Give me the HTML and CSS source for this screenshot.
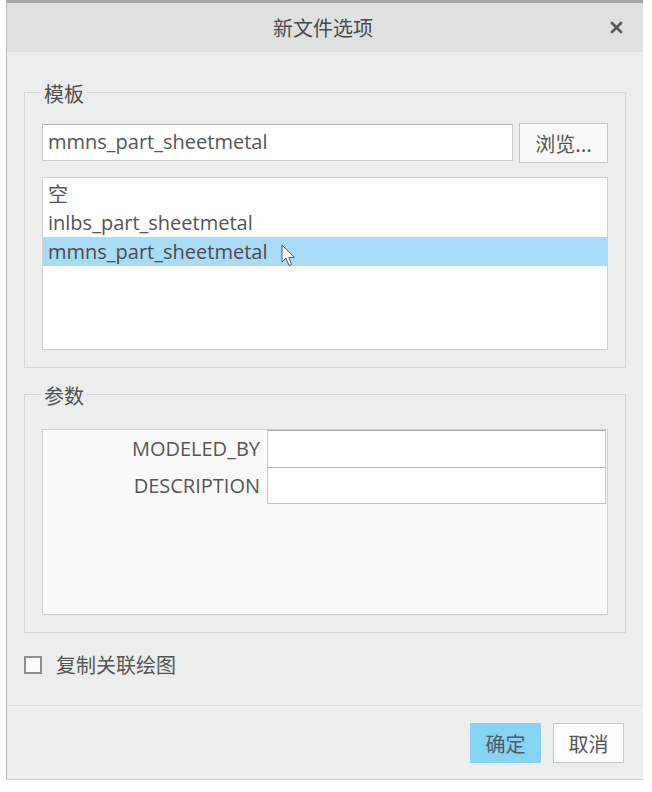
FILE: index.html
```html
<!DOCTYPE html>
<html lang="zh">
<head>
<meta charset="utf-8">
<title>新文件选项</title>
<link rel="stylesheet" href="styles.css">
</head>
<body>
<div class="dialog">
  <div class="titlebar">
    <span class="title">新文件选项</span>
    <span class="close" aria-label="关闭">
      <svg width="13" height="13" viewBox="0 0 13 13"><path d="M2 2 L11 11 M11 2 L2 11" stroke="#5a5a5a" stroke-width="2.8" stroke-linecap="round"/></svg>
    </span>
  </div>
  <div class="content">
    <div class="group group-template">
      <div class="group-title">模板</div>
      <div class="path-row">
        <div class="text-input">mmns_part_sheetmetal</div>
        <div class="btn btn-browse">浏览...</div>
      </div>
      <div class="listbox">
        <div class="list-item">空</div>
        <div class="list-item">inlbs_part_sheetmetal</div>
        <div class="list-item selected">mmns_part_sheetmetal<svg class="cursor" width="15" height="24" viewBox="0 0 15 24"><path d="M1 1 L1 18 L5 14.2 L8 21.5 L10.6 20.4 L7.7 13.4 L13.2 13.4 Z" fill="#fff" stroke="#555" stroke-width="1" stroke-linejoin="round"/></svg></div>
      </div>
    </div>
    <div class="group group-params">
      <div class="group-title">参数</div>
      <div class="param-table">
        <div class="param-row">
          <div class="param-name">MODELED_BY</div>
          <div class="param-value"></div>
        </div>
        <div class="param-row">
          <div class="param-name">DESCRIPTION</div>
          <div class="param-value"></div>
        </div>
      </div>
    </div>
    <div class="check-row">
      <span class="checkbox"></span>
      <span class="check-label">复制关联绘图</span>
    </div>
  </div>
  <div class="footer">
    <div class="btn btn-primary">确定</div>
    <div class="btn btn-cancel">取消</div>
  </div>
</div>
</body>
</html>
```

FILE: styles.css
```css
* { box-sizing: border-box; }
html, body { margin: 0; padding: 0; background: #ffffff; }
body {
  font-family: "Open Sans", "Noto Sans CJK SC", sans-serif;
  color: #555555;
  width: 652px;
  height: 792px;
  overflow: hidden;
}
.dialog {
  margin-left: 6px;
  width: 637px;
  background: #eceeee;
  border-top: 3px solid #a3a5a5;
  border-left: 1px solid #b9bbbb;
  border-bottom: 1px solid #cfd1d1;
}
.titlebar {
  height: 49px;
  background: #dfe1e1;
  display: grid;
  grid-template-columns: 1fr auto 1fr;
  align-items: center;
}
.title {
  grid-column: 2;
  font-family: "Noto Sans CJK SC", sans-serif;
  font-size: 20px;
  color: #4a4a4a;
  margin-left: -4px;
}
.close {
  grid-column: 3;
  justify-self: end;
  margin-right: 20px;
  display: flex;
}
.content {
  padding: 40px 17px 0 17px;
}
.group {
  border: 1px solid #d3d6d6;
  padding: 0 17px 17px 17px;
}
.group-title {
  display: block;
  width: fit-content;
  margin: -11px 0 0 -1px;
  padding: 0 3px;
  height: 24px;
  line-height: 24px;
  background: #eceeee;
  font-family: "Noto Sans CJK SC", sans-serif;
  font-size: 20px;
  color: #4f4f4f;
}
.path-row {
  display: flex;
  gap: 6px;
  margin-top: 18px;
  align-items: flex-start;
}
.text-input {
  flex: 1;
  height: 37px;
  background: #ffffff;
  border: 1px solid #c9cbcb;
  border-top-color: #b5b7b7;
  padding-left: 5px;
  font-size: 20px;
  line-height: 34px;
  white-space: nowrap;
}
.btn {
  display: flex;
  align-items: center;
  justify-content: center;
  font-family: "Noto Sans CJK SC", sans-serif;
  font-size: 20px;
  color: #555;
}
.btn-browse {
  width: 89px;
  height: 40px;
  margin-top: -1px;
  background: #f9f9f9;
  border: 1px solid #c3c5c5;
}
.listbox {
  margin-top: 14px;
  height: 173px;
  background: #ffffff;
  border: 1px solid #cfd1d1;
  padding-top: 1px;
}
.list-item {
  height: 29px;
  line-height: 29px;
  padding-left: 5px;
  font-size: 20px;
  color: #555;
  white-space: nowrap;
}
.list-item:first-child {
  font-family: "Noto Sans CJK SC", sans-serif;
}
.list-item.selected {
  background: #a8dcf6;
  color: #4a4a4a;
}
.cursor {
  vertical-align: -9px;
  margin-left: 14px;
}
.group-params {
  margin-top: 26px;
}
.group-params .param-table {
  margin-top: 21px;
}
.param-table {
  height: 186px;
  background: #fafafa;
  border: 1px solid #cfd1d1;
  padding: 0 1px;
}
.param-row {
  display: flex;
  align-items: stretch;
}
.param-name {
  width: 223px;
  padding-right: 7px;
  text-align: right;
  font-size: 20px;
  line-height: 38px;
  color: #555;
}
.param-value {
  flex: 1;
  height: 38px;
  background: #ffffff;
  border: 1px solid #c4c6c6;
  border-top-color: #a9abab;
}
.param-row + .param-row .param-value {
  height: 37px;
  border-top-color: #b3b5b5;
}
.param-row + .param-row {
  margin-top: -1px;
}
.check-row {
  display: flex;
  align-items: center;
  margin: 22px 0 0 0;
  height: 19px;
}
.checkbox {
  width: 18px;
  height: 18px;
  border: 2px solid #8d8f8f;
  background: #fbfbfb;
}
.check-label {
  margin-left: 14px;
  font-family: "Noto Sans CJK SC", sans-serif;
  font-size: 20px;
  color: #555;
}
.footer {
  margin-top: 31px;
  border-top: 1px solid #dddfdf;
  background: #edefef;
  display: flex;
  justify-content: flex-end;
  gap: 12px;
  padding: 17px 19px 16px 0;
}
.btn-primary {
  width: 71px;
  height: 40px;
  background: #86d3f5;
  color: #4f5a60;
}
.btn-cancel {
  width: 71px;
  height: 40px;
  background: #fdfdfd;
  border: 1px solid #c5c7c7;
}
```
